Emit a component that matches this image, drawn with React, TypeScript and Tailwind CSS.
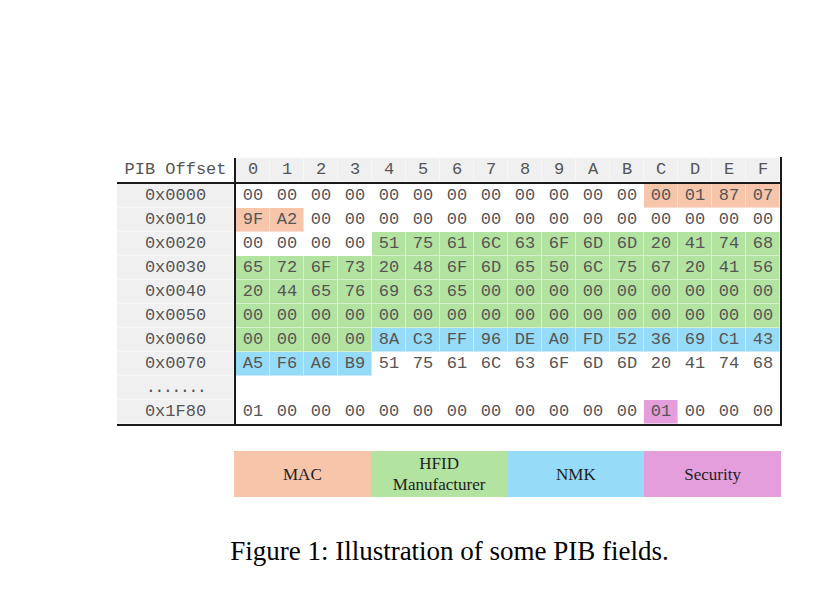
const rows = [
  { off: "0x0000", bytes: "00 00 00 00 00 00 00 00 00 00 00 00 00 01 87 07", fill: "............mmmm" },
  { off: "0x0010", bytes: "9F A2 00 00 00 00 00 00 00 00 00 00 00 00 00 00", fill: "mm.............." },
  { off: "0x0020", bytes: "00 00 00 00 51 75 61 6C 63 6F 6D 6D 20 41 74 68", fill: "....hhhhhhhhhhhh" },
  { off: "0x0030", bytes: "65 72 6F 73 20 48 6F 6D 65 50 6C 75 67 20 41 56", fill: "hhhhhhhhhhhhhhhh" },
  { off: "0x0040", bytes: "20 44 65 76 69 63 65 00 00 00 00 00 00 00 00 00", fill: "hhhhhhhhhhhhhhhh" },
  { off: "0x0050", bytes: "00 00 00 00 00 00 00 00 00 00 00 00 00 00 00 00", fill: "hhhhhhhhhhhhhhhh" },
  { off: "0x0060", bytes: "00 00 00 00 8A C3 FF 96 DE A0 FD 52 36 69 C1 43", fill: "hhhhnnnnnnnnnnnn" },
  { off: "0x0070", bytes: "A5 F6 A6 B9 51 75 61 6C 63 6F 6D 6D 20 41 74 68", fill: "nnnn............" },
  { off: ".......", bytes: "", fill: "................" },
  { off: "0x1F80", bytes: "01 00 00 00 00 00 00 00 00 00 00 00 01 00 00 00", fill: "............s..." },
];

const fills: Record<string, string> = {
  m: "bg-[#f6c5aa]",
  h: "bg-[#b3e3a0]",
  n: "bg-[#96dbf7]",
  s: "bg-[#e39edb]",
  ".": "bg-white",
};

const header = ["0", "1", "2", "3", "4", "5", "6", "7", "8", "9", "A", "B", "C", "D", "E", "F"];

const legend = [
  { label: "MAC", cls: "bg-[#f6c5aa]" },
  { label: "HFID\nManufacturer", cls: "bg-[#b3e3a0]" },
  { label: "NMK", cls: "bg-[#96dbf7]" },
  { label: "Security", cls: "bg-[#e39edb]" },
];

const cellLine = "shadow-[inset_-1px_-1px_0_rgba(255,255,255,0.45)]";

const App = () => {
  return (
    <div className="w-[816px] h-[616px] bg-white pt-[157px] pl-[117px] overflow-hidden">
      <div className="w-[665px]">
        {/* hex table */}
        <div className="border-b-2 border-[#1a1a1a] font-['Liberation_Mono',monospace] text-[17px] text-[#555]">
          <div className="flex h-[27px] pt-px border-b-2 border-r-2 border-[#1a1a1a]">
            <div className="w-[119px] border-r-2 border-[#1a1a1a] bg-white flex items-center justify-center">
              PIB Offset
            </div>
            {header.map((h) => (
              <div key={h} className={`w-[34px] bg-[#f0f0f0] flex items-center justify-center ${cellLine}`}>
                {h}
              </div>
            ))}
          </div>

          {rows.map((r) => {
            const bytes = r.bytes ? r.bytes.split(" ") : [];
            return (
              <div key={r.off} className="flex h-6 border-r-2 border-[#1a1a1a]">
                <div
                  className={`w-[119px] border-r-2 border-[#1a1a1a] bg-[#f0f0f0] flex items-center justify-center ${cellLine} ${
                    r.off.startsWith(".") ? "tracking-[-1.7px]" : ""
                  }`}
                >
                  {r.off}
                </div>
                {r.fill.split("").map((f, i) => (
                  <div key={i} className={`w-[34px] flex items-center justify-center ${fills[f]} ${cellLine}`}>
                    {bytes[i] ?? ""}
                  </div>
                ))}
              </div>
            );
          })}
        </div>

        {/* legend */}
        <div className="ml-[117px] mt-[25px] w-[547px] h-[46px] grid grid-cols-4 font-['Liberation_Serif',serif] text-[17px] leading-[21px] text-[#1e1e1e]">
          {legend.map((l) => (
            <div key={l.label} className={`flex items-center justify-center text-center whitespace-pre-line ${l.cls}`}>
              {l.label}
            </div>
          ))}
        </div>

        {/* caption */}
        <p className="mt-[39px] text-center font-['Liberation_Serif',serif] text-[27px] leading-[31px] text-black">
          Figure 1: Illustration of some PIB fields.
        </p>
      </div>
    </div>
  );
};

export default App;
